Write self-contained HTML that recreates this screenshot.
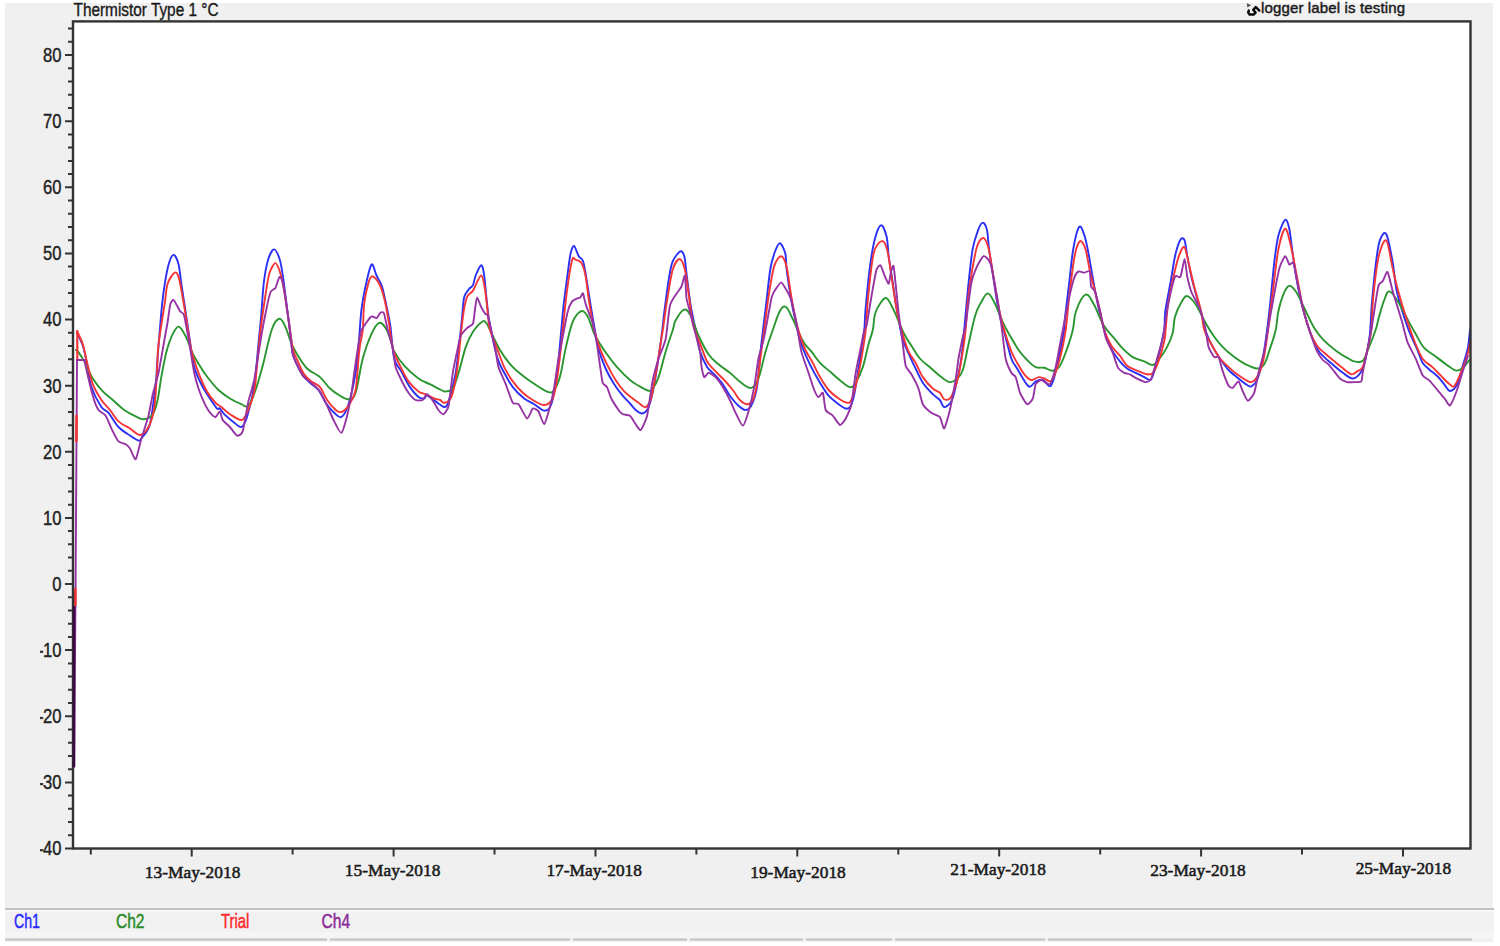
<!DOCTYPE html>
<html><head><meta charset="utf-8"><style>
html,body{margin:0;padding:0;width:1500px;height:946px;overflow:hidden;background:#fff;}
svg{display:block;font-family:"Liberation Sans",sans-serif;}
</style></head><body>
<svg width="1500" height="946" viewBox="0 0 1500 946"><rect x="0" y="0" width="1500" height="946" fill="#ffffff"/>
<rect x="5" y="3" width="1488" height="939" fill="#f0f0f0"/>
<rect x="73.0" y="21.4" width="1397.5" height="827.1" fill="#ffffff"/>
<g fill="none" stroke-width="1.9" stroke-linejoin="round" stroke-linecap="round">
<path d="M77.0,333.0 C77.9,334.9 81.3,340.9 82.8,345.5 C84.3,350.1 85.8,357.8 87.1,364.0 C88.4,370.2 89.3,380.6 91.4,387.0 C93.5,393.4 98.8,403.1 101.4,407.0 C104.0,410.9 105.9,409.8 108.5,412.8 C111.1,415.8 115.3,423.6 118.5,427.0 C121.7,430.4 127.0,433.6 130.0,435.6 C133.0,437.6 136.8,440.2 138.5,440.6 C140.2,441.0 139.7,441.0 141.4,438.5 C143.1,436.0 147.9,432.2 150.0,424.0 C152.1,415.8 154.6,392.7 155.7,384.0 C156.8,375.3 156.5,372.3 157.0,365.7 C157.5,359.1 158.2,349.2 159.0,340.0 C159.8,330.8 161.2,312.7 162.1,304.3 C163.0,295.9 163.8,289.9 164.8,283.7 C165.8,277.5 167.7,267.4 169.0,263.1 C170.3,258.8 172.4,254.7 173.8,254.9 C175.2,255.1 177.5,260.2 178.6,264.5 C179.7,268.8 180.3,276.7 181.3,283.7 C182.3,290.7 184.3,302.9 185.5,311.2 C186.7,319.4 188.3,330.3 189.6,338.7 C190.9,347.1 192.4,360.2 194.2,367.0 C196.0,373.8 198.9,379.5 201.3,384.2 C203.7,388.9 207.6,394.9 210.0,398.5 C212.4,402.1 215.5,407.0 217.0,408.5 C218.5,410.0 218.9,407.6 220.0,408.5 C221.1,409.4 222.3,412.3 224.2,414.2 C226.1,416.1 230.1,419.5 232.7,421.4 C235.3,423.3 239.2,427.7 241.3,427.0 C243.4,426.3 245.1,423.2 247.0,417.0 C248.9,410.8 252.5,396.6 254.2,385.7 C255.9,374.8 257.4,354.5 258.4,344.3 C259.4,334.1 260.2,327.1 261.0,318.0 C261.8,308.9 262.7,292.3 263.7,283.7 C264.7,275.1 266.4,265.5 267.9,260.4 C269.4,255.3 272.2,249.6 274.0,249.4 C275.8,249.2 278.2,254.9 279.6,259.0 C281.0,263.1 281.9,269.5 283.0,276.9 C284.1,284.3 285.9,299.2 287.1,308.5 C288.3,317.8 290.3,331.8 291.2,338.7 C292.1,345.6 291.3,349.2 292.8,354.3 C294.3,359.4 298.8,368.5 301.4,372.8 C304.0,377.1 307.4,380.2 310.0,382.8 C312.6,385.4 316.1,387.0 318.5,390.0 C320.9,393.0 323.3,399.4 325.7,402.8 C328.1,406.2 331.8,410.7 334.2,412.8 C336.6,414.9 339.3,418.3 341.4,417.0 C343.5,415.7 346.4,410.8 348.5,404.2 C350.6,397.6 354.1,381.7 355.6,372.8 C357.1,363.9 357.7,354.2 358.6,345.0 C359.5,335.8 360.3,320.0 361.3,311.2 C362.3,302.4 364.0,293.5 365.5,286.5 C367.0,279.5 370.0,266.1 371.6,264.5 C373.2,262.9 374.9,272.2 376.5,275.5 C378.1,278.8 380.6,282.2 382.0,286.5 C383.4,290.8 384.9,298.5 386.1,304.3 C387.3,310.1 389.0,316.9 390.2,325.0 C391.4,333.1 392.5,351.5 394.2,358.5 C395.9,365.5 398.9,367.1 401.3,371.4 C403.7,375.7 407.3,383.3 409.9,387.1 C412.5,390.9 416.4,395.3 418.5,397.0 C420.6,398.7 422.9,398.7 424.2,398.5 C425.5,398.3 425.3,395.3 427.0,395.7 C428.7,396.1 433.0,399.7 435.6,401.4 C438.2,403.1 442.2,407.0 444.2,407.0 C446.1,407.0 446.9,406.5 448.6,401.4 C450.3,396.3 454.0,382.5 455.7,372.8 C457.4,363.1 459.1,345.2 460.0,337.0 C460.9,328.8 461.4,324.0 462.0,318.1 C462.6,312.2 463.1,301.8 464.1,297.5 C465.1,293.2 467.6,291.1 468.9,289.2 C470.2,287.3 472.0,287.2 473.0,285.1 C474.0,283.0 474.5,278.5 475.7,275.5 C476.9,272.5 480.0,265.4 481.2,265.2 C482.4,265.0 483.2,268.9 484.0,274.1 C484.8,279.4 485.9,293.0 486.7,300.2 C487.5,307.4 487.9,313.7 489.5,322.2 C491.1,330.7 494.9,349.5 497.1,357.1 C499.3,364.7 501.8,368.3 504.2,372.8 C506.6,377.3 509.8,383.2 512.8,387.1 C515.8,391.0 521.0,395.9 524.2,398.5 C527.4,401.1 531.2,402.4 534.2,404.2 C537.2,406.0 541.6,410.7 544.2,410.7 C546.8,410.7 549.4,409.9 551.3,404.2 C553.2,398.5 555.6,383.9 557.1,372.8 C558.6,361.7 560.3,340.3 561.3,330.0 C562.3,319.7 562.7,312.9 563.7,304.3 C564.7,295.7 566.8,280.3 567.8,272.7 C568.8,265.1 569.7,257.5 570.6,253.5 C571.5,249.5 572.8,245.5 574.0,245.9 C575.2,246.3 577.4,253.9 578.8,256.2 C580.1,258.5 582.0,258.3 583.0,261.0 C584.0,263.7 584.7,268.2 585.7,274.1 C586.7,280.0 588.6,292.6 589.8,300.2 C591.0,307.8 592.7,317.7 594.0,325.0 C595.3,332.3 596.8,342.1 598.5,348.6 C600.2,355.1 603.2,363.2 605.6,368.5 C608.0,373.8 611.6,380.1 614.2,384.2 C616.8,388.3 620.3,392.8 622.7,395.7 C625.1,398.6 628.0,401.4 630.0,403.5 C632.0,405.6 633.9,408.5 635.7,410.0 C637.5,411.5 640.2,413.9 642.1,413.5 C644.0,413.1 646.8,411.5 648.6,407.1 C650.4,402.7 652.4,394.7 654.3,384.2 C656.2,373.7 659.9,348.1 661.4,337.1 C662.9,326.2 663.3,319.6 664.4,311.2 C665.5,302.8 667.3,288.4 668.5,281.0 C669.7,273.6 670.8,266.1 672.6,261.7 C674.4,257.3 678.4,252.2 680.2,251.4 C682.0,250.6 683.4,253.0 684.3,256.2 C685.2,259.4 685.5,265.5 686.4,272.7 C687.3,279.9 689.1,295.4 690.5,304.3 C691.9,313.2 694.6,324.7 696.0,331.8 C697.4,338.9 698.3,346.1 700.0,351.4 C701.7,356.7 705.0,363.7 707.1,367.1 C709.2,370.5 711.8,371.7 714.2,374.3 C716.6,376.9 720.4,381.0 722.8,384.2 C725.2,387.4 727.5,392.5 729.9,395.7 C732.3,398.9 736.1,403.6 738.5,405.7 C740.9,407.8 743.7,410.0 745.6,410.0 C747.5,410.0 749.6,409.1 751.3,405.7 C753.0,402.3 755.5,396.3 757.0,387.1 C758.5,377.9 759.9,356.7 761.3,344.3 C762.7,331.9 764.8,315.4 766.1,304.3 C767.4,293.2 769.0,277.6 770.2,270.0 C771.4,262.4 772.9,257.5 774.3,253.5 C775.7,249.5 778.1,243.2 779.8,243.2 C781.4,243.2 784.3,249.5 785.3,253.5 C786.3,257.5 785.9,263.4 786.7,270.0 C787.5,276.6 789.4,289.2 790.8,297.5 C792.2,305.8 794.7,318.0 796.3,325.0 C797.9,332.0 799.3,338.4 801.3,344.3 C803.3,350.2 807.1,358.5 809.9,364.3 C812.7,370.1 817.2,378.1 820.0,382.8 C822.8,387.5 825.8,392.5 828.6,395.7 C831.4,398.9 836.0,402.3 838.6,404.2 C841.2,406.1 844.0,408.1 845.7,408.5 C847.4,408.9 848.7,409.2 850.0,407.1 C851.3,405.0 852.8,401.5 854.3,394.2 C855.8,386.9 858.5,368.1 860.0,358.5 C861.5,348.9 863.5,337.1 864.3,330.0 C865.1,322.9 864.6,320.2 865.4,311.2 C866.2,302.2 868.1,280.9 869.5,270.0 C870.9,259.1 873.2,245.1 875.0,238.4 C876.8,231.7 879.4,225.5 881.2,225.3 C883.0,225.1 885.6,232.4 886.7,237.0 C887.8,241.6 887.8,249.2 888.7,256.2 C889.6,263.2 891.7,275.4 892.9,283.7 C894.1,291.9 895.6,302.9 897.0,311.2 C898.4,319.4 901.0,332.9 902.5,338.7 C904.0,344.5 905.3,345.9 907.1,350.0 C908.9,354.1 911.8,360.8 914.2,365.7 C916.6,370.6 920.0,378.5 922.8,382.8 C925.6,387.1 930.2,391.6 932.8,394.2 C935.4,396.8 938.2,398.1 939.9,400.0 C941.6,401.9 942.5,406.9 944.2,407.1 C945.9,407.3 949.6,404.4 951.3,401.4 C953.0,398.4 954.1,393.5 955.6,387.1 C957.1,380.7 960.0,367.1 961.3,358.5 C962.6,349.9 963.1,341.2 964.2,330.0 C965.3,318.8 967.2,295.8 968.5,283.7 C969.8,271.6 971.2,257.4 972.6,249.4 C974.0,241.4 976.6,234.1 978.1,230.1 C979.6,226.1 981.6,222.6 982.9,222.6 C984.2,222.6 986.1,226.1 987.0,230.1 C987.9,234.1 988.2,242.4 989.1,249.4 C990.0,256.4 991.8,267.6 993.2,276.9 C994.6,286.2 997.1,303.0 998.7,311.2 C1000.4,319.4 1002.3,324.7 1004.2,331.8 C1006.1,338.9 1009.4,353.0 1011.3,358.5 C1013.2,364.0 1014.5,364.3 1017.1,368.5 C1019.7,372.7 1025.8,384.5 1028.6,386.4 C1031.4,388.3 1033.6,382.4 1035.7,381.4 C1037.8,380.4 1040.7,379.2 1042.8,380.0 C1044.9,380.8 1048.3,386.8 1050.0,386.4 C1051.7,386.0 1053.0,381.3 1054.3,377.1 C1055.6,372.9 1057.0,365.6 1058.5,358.5 C1060.0,351.4 1063.2,336.1 1064.2,330.0 C1065.0,323.9 1064.3,325.0 1065.0,318.1 C1065.7,311.2 1067.9,294.0 1069.1,283.7 C1070.3,273.4 1071.7,257.9 1073.2,249.4 C1074.7,240.8 1077.6,228.6 1079.4,226.7 C1081.2,224.8 1083.5,232.6 1084.9,237.0 C1086.3,241.4 1087.7,249.2 1089.0,256.2 C1090.3,263.2 1092.3,275.4 1093.8,283.7 C1095.3,291.9 1097.4,303.4 1099.3,311.2 C1101.2,319.0 1104.2,330.0 1106.2,336.0 C1108.2,342.0 1110.7,347.6 1112.8,351.4 C1114.9,355.2 1117.8,358.8 1119.9,361.4 C1122.0,364.0 1124.7,366.8 1127.1,368.5 C1129.5,370.2 1133.0,371.5 1135.6,372.8 C1138.2,374.1 1142.0,376.0 1144.2,377.1 C1146.5,378.2 1149.1,380.9 1150.6,380.0 C1152.1,379.1 1153.0,375.0 1154.2,371.4 C1155.4,367.8 1157.0,361.9 1158.5,355.7 C1160.0,349.5 1163.2,336.7 1164.2,330.0 C1165.2,323.3 1164.3,318.6 1165.3,311.2 C1166.3,303.8 1169.3,289.2 1170.8,281.0 C1172.3,272.8 1173.6,262.4 1175.0,256.2 C1176.4,250.0 1179.0,242.1 1180.4,239.7 C1181.8,237.3 1183.6,237.9 1184.6,240.4 C1185.6,242.9 1186.3,250.7 1187.3,256.2 C1188.3,261.7 1190.0,270.7 1191.4,276.9 C1192.8,283.1 1195.2,291.3 1196.9,297.5 C1198.6,303.7 1201.0,312.9 1202.4,318.1 C1203.8,323.3 1204.4,327.6 1206.0,332.0 C1207.6,336.4 1210.7,343.1 1212.8,347.1 C1214.9,351.1 1217.6,355.1 1220.0,358.5 C1222.4,361.9 1225.8,367.0 1228.6,370.0 C1231.4,373.0 1235.7,376.2 1238.5,378.5 C1241.3,380.8 1245.2,383.8 1247.1,385.0 C1249.0,386.2 1249.9,387.1 1251.4,386.4 C1252.9,385.6 1255.4,384.2 1257.1,380.0 C1258.8,375.8 1261.3,366.0 1262.8,358.5 C1264.3,351.0 1266.0,338.1 1267.1,330.0 C1268.2,321.9 1269.0,314.3 1270.1,304.3 C1271.2,294.3 1273.0,273.4 1274.2,263.1 C1275.4,252.8 1276.8,242.1 1278.4,235.6 C1280.1,229.1 1283.6,220.8 1285.2,219.8 C1286.8,218.8 1288.3,224.3 1289.3,228.7 C1290.3,233.1 1291.1,242.2 1292.1,249.4 C1293.1,256.6 1294.8,268.7 1296.2,276.9 C1297.6,285.1 1299.8,296.7 1301.7,304.3 C1303.6,311.9 1306.3,321.1 1308.6,327.7 C1310.9,334.3 1314.8,344.2 1317.1,348.6 C1319.4,353.0 1321.6,354.5 1324.2,357.1 C1326.8,359.7 1331.4,363.3 1334.2,365.7 C1337.0,368.1 1340.0,370.9 1342.8,372.8 C1345.6,374.7 1350.0,378.7 1352.8,378.5 C1355.6,378.3 1359.4,374.4 1361.3,371.4 C1363.2,368.4 1364.3,364.1 1365.6,358.5 C1366.9,352.9 1369.0,342.4 1369.9,334.3 C1370.8,326.2 1370.9,315.0 1371.8,304.3 C1372.7,293.6 1374.7,272.8 1375.9,263.1 C1377.1,253.4 1378.5,244.0 1380.1,239.7 C1381.7,235.4 1384.4,230.8 1386.3,234.2 C1388.2,237.6 1391.2,253.9 1392.7,262.3 C1394.2,270.7 1394.9,282.1 1396.5,290.0 C1398.1,297.9 1401.3,308.1 1403.4,314.7 C1405.5,321.3 1408.1,328.9 1410.2,334.0 C1412.3,339.1 1415.2,344.7 1417.1,349.0 C1419.0,353.3 1420.7,359.7 1422.6,362.8 C1424.5,365.9 1427.2,367.6 1429.5,369.7 C1431.8,371.8 1435.4,374.2 1437.7,376.5 C1440.0,378.8 1442.8,382.6 1444.6,384.8 C1446.4,387.0 1448.2,391.0 1450.0,391.0 C1451.8,391.0 1455.0,388.4 1456.9,384.8 C1458.8,381.2 1460.8,372.6 1462.4,367.0 C1464.1,361.4 1466.8,353.3 1467.9,347.7 C1469.0,342.1 1469.7,332.5 1470.0,329.8" stroke="#2a30f4"/>
<path d="M76.0,350.0 C76.3,350.3 76.4,349.3 77.9,351.4 C79.4,353.5 81.6,356.4 84.3,361.4 C87.0,366.4 89.4,373.0 92.8,378.5 C96.2,384.0 99.1,387.5 102.8,391.4 C106.5,395.3 108.9,396.6 112.8,400.0 C116.7,403.4 120.0,407.0 124.2,410.0 C128.4,413.0 132.0,414.7 135.7,416.4 C139.4,418.1 141.1,419.6 144.2,419.2 C147.3,418.8 150.3,417.7 152.8,414.2 C155.3,410.7 156.0,406.9 157.6,400.0 C159.2,393.1 159.8,385.2 161.4,376.5 C163.0,367.8 164.6,359.4 166.2,352.8 C167.8,346.2 168.6,344.2 170.0,340.4 C171.4,336.6 172.2,334.4 173.8,331.9 C175.4,329.4 176.8,326.6 178.5,326.6 C180.2,326.6 181.6,329.2 183.3,331.9 C185.0,334.6 186.3,337.4 188.0,341.4 C189.7,345.4 190.7,349.4 192.8,353.7 C194.9,358.0 196.8,360.9 199.4,365.1 C202.0,369.3 203.5,371.9 207.0,376.5 C210.5,381.1 214.3,386.0 218.5,390.0 C222.7,394.0 225.7,395.9 229.9,398.5 C234.1,401.1 237.9,402.9 241.3,404.2 C244.7,405.5 245.8,408.3 248.4,405.7 C251.0,403.1 253.0,397.3 255.6,390.0 C258.2,382.7 259.7,376.9 262.7,365.7 C265.7,354.5 268.9,337.6 272.0,329.0 C275.1,320.4 277.1,319.0 279.6,318.8 C282.1,318.6 283.6,323.3 285.7,327.7 C287.8,332.1 289.1,337.9 291.2,342.8 C293.3,347.7 294.2,349.6 297.1,354.3 C300.0,359.0 302.9,364.3 307.1,368.5 C311.3,372.7 315.8,373.4 320.0,377.1 C324.2,380.8 326.3,385.1 330.0,388.5 C333.7,391.9 336.6,393.7 340.0,395.7 C343.4,397.7 345.6,399.7 348.5,399.2 C351.4,398.7 353.0,400.3 355.6,392.8 C358.2,385.3 359.9,369.2 362.8,358.5 C365.7,347.8 368.3,340.8 371.3,334.3 C374.3,327.8 376.5,323.9 379.2,322.9 C381.9,321.9 383.8,325.4 386.1,329.0 C388.4,332.6 390.1,338.7 391.6,342.8 C393.1,346.9 391.9,347.2 394.2,351.4 C396.5,355.6 399.7,360.7 404.2,365.7 C408.7,370.7 413.8,375.1 418.5,378.5 C423.2,381.9 425.7,382.1 429.9,384.2 C434.1,386.3 438.4,388.7 441.3,390.0 C444.2,391.3 443.6,391.7 445.7,391.4 C447.8,391.1 450.4,391.9 452.8,388.5 C455.2,385.1 456.2,380.4 458.6,372.8 C461.0,365.2 463.1,354.6 465.7,347.1 C468.3,339.6 469.9,336.5 473.0,331.8 C476.1,327.1 480.1,323.0 482.6,321.5 C485.1,320.0 485.3,322.0 486.7,323.6 C488.1,325.2 487.6,325.2 490.0,330.0 C492.4,334.8 496.1,343.5 500.0,350.0 C503.9,356.5 507.2,361.0 511.4,365.7 C515.6,370.4 518.1,372.0 522.8,375.7 C527.5,379.4 532.4,382.7 537.1,385.7 C541.8,388.7 545.4,391.3 548.5,392.1 C551.6,392.9 552.1,392.8 554.2,390.0 C556.3,387.2 557.8,384.7 559.9,377.1 C562.0,369.5 563.4,358.4 565.6,348.6 C567.8,338.8 569.8,329.9 572.0,323.6 C574.2,317.3 575.5,316.3 577.5,314.0 C579.5,311.7 581.0,310.4 583.0,311.2 C585.0,312.0 586.2,313.6 588.5,318.1 C590.8,322.6 591.9,329.4 595.3,336.0 C598.7,342.6 603.0,348.6 607.0,354.3 C611.0,360.0 612.8,362.4 617.0,367.1 C621.2,371.8 626.0,376.6 630.0,380.0 C634.0,383.4 635.2,383.7 638.6,385.7 C642.0,387.7 646.0,390.2 648.6,390.7 C651.2,391.2 651.0,391.0 652.8,388.5 C654.6,386.0 656.2,383.9 658.6,377.1 C661.0,370.3 663.1,360.0 665.7,351.4 C668.3,342.8 671.0,335.6 672.8,330.0 C674.6,324.4 673.4,324.5 675.4,320.8 C677.4,317.1 680.8,310.8 683.6,309.8 C686.4,308.8 687.7,310.5 690.5,315.3 C693.3,320.1 695.4,328.9 698.7,336.0 C702.0,343.1 704.9,349.1 708.5,354.3 C712.1,359.5 714.6,360.9 718.5,364.3 C722.4,367.7 725.7,369.4 729.9,372.8 C734.1,376.2 737.4,380.1 741.3,382.8 C745.2,385.6 748.1,388.6 751.3,387.8 C754.5,387.0 755.9,385.2 758.5,378.5 C761.1,371.8 763.0,360.3 765.6,351.4 C768.2,342.5 770.2,337.4 772.8,330.0 C775.4,322.6 777.4,315.4 779.8,311.2 C782.2,307.0 783.5,305.3 786.0,307.1 C788.5,308.9 790.4,314.5 793.6,320.8 C796.8,327.1 800.0,335.9 803.2,341.5 C806.4,347.1 808.2,347.5 811.3,351.4 C814.4,355.3 816.3,358.9 820.0,362.8 C823.7,366.7 827.5,369.4 831.4,372.8 C835.3,376.2 838.0,378.8 841.4,381.4 C844.8,384.0 847.4,386.8 850.0,387.1 C852.6,387.4 853.4,386.5 855.7,382.8 C858.0,379.1 860.5,374.2 862.8,367.1 C865.1,360.0 866.7,351.1 868.5,344.3 C870.3,337.5 871.6,335.6 872.8,330.0 C874.0,324.4 873.6,318.9 875.0,314.0 C876.4,309.1 878.4,305.9 880.5,303.0 C882.6,300.1 884.2,296.7 886.7,298.2 C889.2,299.7 891.1,304.8 894.2,311.2 C897.3,317.6 900.6,326.9 903.8,333.2 C907.0,339.5 908.4,341.1 911.4,345.7 C914.4,350.3 916.3,354.3 919.9,358.5 C923.5,362.7 927.4,365.1 931.3,368.5 C935.2,371.9 937.9,374.6 941.3,377.1 C944.7,379.6 947.0,381.8 949.9,382.1 C952.8,382.4 954.6,380.7 957.0,378.5 C959.4,376.3 960.7,376.3 962.8,370.0 C964.9,363.7 966.2,354.3 968.5,344.3 C970.8,334.3 973.0,322.9 975.3,315.3 C977.6,307.7 978.5,307.0 980.8,303.0 C983.1,299.0 985.2,293.4 987.7,293.4 C990.2,293.4 991.8,297.7 994.6,303.0 C997.4,308.3 1000.0,316.2 1002.8,322.2 C1005.6,328.2 1007.1,330.6 1010.0,335.7 C1012.9,340.8 1015.5,345.5 1018.6,350.0 C1021.7,354.5 1024.0,356.9 1027.1,360.0 C1030.2,363.1 1032.5,365.7 1035.7,367.1 C1038.9,368.5 1041.2,367.1 1044.3,367.8 C1047.4,368.5 1049.9,371.1 1052.8,370.7 C1055.7,370.3 1057.4,369.8 1060.0,365.7 C1062.6,361.6 1064.8,355.1 1067.1,348.6 C1069.4,342.1 1071.2,336.9 1072.8,330.0 C1074.4,323.1 1073.7,317.7 1076.0,311.2 C1078.3,304.7 1082.3,296.0 1085.6,294.7 C1088.9,293.4 1090.5,298.7 1093.8,304.3 C1097.1,309.9 1099.7,318.7 1103.5,325.0 C1107.3,331.3 1111.0,334.4 1114.5,338.7 C1118.0,343.0 1119.4,345.2 1122.8,348.6 C1126.2,352.0 1128.9,354.8 1132.8,357.1 C1136.7,359.4 1140.5,360.0 1144.2,361.4 C1147.9,362.8 1150.2,365.3 1152.8,365.0 C1155.4,364.7 1155.9,363.3 1158.5,360.0 C1161.1,356.7 1164.4,352.1 1167.0,347.1 C1169.6,342.1 1171.2,338.5 1172.7,332.9 C1174.2,327.3 1173.3,322.4 1175.0,316.7 C1176.7,311.0 1179.5,305.4 1181.8,301.6 C1184.1,297.8 1184.8,295.6 1187.3,296.1 C1189.8,296.6 1192.3,299.5 1195.6,304.3 C1198.9,309.1 1201.9,316.4 1205.2,322.2 C1208.5,328.0 1210.5,331.4 1213.7,336.0 C1216.9,340.6 1219.0,343.2 1222.8,347.1 C1226.6,351.0 1230.1,353.9 1234.3,357.1 C1238.5,360.3 1241.5,362.2 1245.7,364.3 C1249.9,366.4 1253.7,368.5 1257.1,368.5 C1260.5,368.5 1261.8,367.9 1264.2,364.3 C1266.6,360.7 1267.9,354.9 1270.0,348.6 C1272.1,342.3 1274.2,336.9 1275.7,330.0 C1277.2,323.1 1276.9,317.9 1278.4,311.2 C1279.9,304.5 1281.8,298.1 1283.8,293.4 C1285.8,288.7 1287.0,286.1 1289.3,285.8 C1291.6,285.5 1293.4,287.8 1296.2,292.0 C1299.0,296.2 1301.2,302.0 1304.5,308.5 C1307.8,315.0 1310.6,321.9 1314.1,327.7 C1317.6,333.5 1319.5,335.8 1323.7,340.1 C1327.9,344.4 1332.5,348.0 1337.0,351.4 C1341.5,354.8 1345.3,356.7 1348.5,358.5 C1351.7,360.3 1351.6,361.0 1354.2,361.4 C1356.8,361.8 1360.1,363.0 1362.7,360.7 C1365.3,358.4 1366.0,354.2 1368.4,348.6 C1370.8,343.0 1373.7,335.6 1375.6,330.0 C1377.5,324.4 1377.1,323.6 1378.7,318.1 C1380.3,312.6 1382.2,305.1 1384.2,300.2 C1386.2,295.3 1386.8,290.8 1389.6,291.4 C1392.3,292.0 1395.7,298.2 1399.2,303.7 C1402.7,309.2 1405.8,316.0 1408.8,321.6 C1411.8,327.2 1412.9,329.2 1415.7,334.0 C1418.5,338.8 1420.5,343.7 1424.0,347.7 C1427.5,351.7 1430.9,352.9 1434.9,355.9 C1438.9,358.9 1442.1,361.5 1445.9,364.2 C1449.7,366.9 1452.5,369.6 1455.5,370.4 C1458.5,371.2 1459.9,370.2 1462.4,368.3 C1464.9,366.4 1468.0,361.5 1469.3,360.0" stroke="#2a962f"/>
<path d="M77.0,331.0 C77.9,333.0 81.3,339.5 82.8,344.3 C84.3,349.1 85.6,356.8 87.1,362.8 C88.6,368.8 90.7,378.6 92.8,384.2 C94.9,389.8 98.8,396.1 101.4,400.0 C104.0,403.9 107.4,406.8 110.0,410.0 C112.6,413.2 115.5,418.6 118.5,421.4 C121.5,424.2 126.8,426.5 130.0,428.5 C133.2,430.5 137.2,435.2 140.0,435.0 C142.8,434.8 146.4,431.0 148.5,427.0 C150.6,423.0 152.9,416.6 154.2,408.5 C155.5,400.4 156.4,382.3 157.0,372.8 C157.6,363.3 157.3,355.5 158.5,345.0 C159.7,334.5 163.4,312.2 164.8,303.0 C166.2,293.8 166.1,288.2 167.6,283.7 C169.1,279.2 172.8,273.7 174.5,272.7 C176.2,271.7 177.4,273.2 178.6,276.9 C179.8,280.6 181.5,290.7 182.7,297.5 C183.9,304.3 185.7,315.1 186.8,322.2 C187.9,329.3 189.4,340.0 190.3,345.0 C191.2,350.0 191.6,351.5 192.8,355.7 C194.0,359.9 196.4,367.4 198.5,372.8 C200.6,378.2 204.4,386.9 207.0,391.4 C209.6,395.9 213.5,400.5 215.6,402.8 C217.7,405.1 219.2,405.3 221.3,407.0 C223.4,408.7 226.9,412.2 229.9,414.2 C232.9,416.1 238.7,420.2 241.3,420.0 C243.9,419.8 245.1,417.1 247.0,412.8 C248.9,408.5 252.7,398.5 254.2,391.4 C255.7,384.3 256.1,374.3 257.0,365.7 C257.9,357.1 258.8,344.5 260.0,334.3 C261.2,324.1 263.7,306.5 265.1,297.5 C266.5,288.5 267.7,279.3 269.2,274.1 C270.7,268.9 273.8,263.3 275.4,263.1 C277.0,262.9 278.8,268.4 280.2,272.7 C281.6,277.0 283.2,285.0 284.4,292.0 C285.6,299.0 287.2,311.0 288.5,319.5 C289.8,328.0 291.3,342.1 292.8,348.6 C294.3,355.1 296.8,358.9 298.5,362.8 C300.2,366.7 302.3,371.5 304.2,374.3 C306.1,377.1 309.0,379.5 311.4,381.4 C313.8,383.3 317.6,384.3 320.0,387.1 C322.4,389.9 324.7,396.6 327.1,400.0 C329.5,403.4 333.6,408.2 335.7,410.0 C337.8,411.8 339.5,412.6 341.4,412.0 C343.3,411.4 346.4,409.0 348.5,405.7 C350.6,402.4 354.1,397.1 355.6,390.0 C357.1,382.9 357.8,365.2 358.5,358.5 C359.2,351.8 359.4,349.3 360.0,345.0 C360.6,340.7 362.2,336.1 362.8,330.0 C363.4,323.9 363.3,311.2 364.1,304.3 C364.9,297.4 367.0,287.9 368.2,283.7 C369.4,279.5 370.7,276.2 372.3,276.2 C373.9,276.2 377.3,280.1 379.2,283.7 C381.1,287.3 383.3,294.4 384.7,300.2 C386.1,306.0 387.6,314.9 388.8,322.2 C390.0,329.5 391.1,342.1 392.8,348.6 C394.5,355.1 397.6,360.8 400.0,365.7 C402.4,370.6 405.7,377.5 408.5,381.4 C411.3,385.3 415.9,389.5 418.5,391.4 C421.1,393.3 423.2,393.1 425.6,394.2 C428.0,395.3 432.0,397.6 434.2,398.5 C436.4,399.4 438.5,399.4 440.0,400.0 C441.5,400.6 442.6,403.2 444.3,402.8 C446.0,402.4 449.5,401.9 451.4,397.0 C453.3,392.1 455.6,380.1 457.1,370.0 C458.6,359.9 460.3,339.2 461.4,330.0 C462.4,320.8 463.2,313.6 464.1,308.5 C465.0,303.4 466.2,298.8 467.5,296.1 C468.8,293.4 470.9,293.7 473.0,290.6 C475.1,287.5 479.3,275.3 481.2,275.5 C483.1,275.7 484.4,285.8 485.4,292.0 C486.4,298.2 487.4,311.0 488.1,316.7 C488.8,322.4 488.6,325.2 490.0,330.0 C491.4,334.8 495.0,343.0 497.1,348.6 C499.2,354.2 501.8,362.2 504.2,367.1 C506.6,372.0 510.0,377.5 512.8,381.4 C515.6,385.3 519.8,390.0 522.8,392.8 C525.8,395.6 529.6,398.2 532.8,400.0 C536.0,401.8 541.2,405.2 544.2,405.0 C547.2,404.8 550.9,402.5 552.8,398.5 C554.7,394.5 555.8,386.6 557.1,378.5 C558.4,370.4 559.9,356.9 561.3,344.3 C562.7,331.7 564.9,307.3 566.5,294.7 C568.1,282.1 570.7,265.6 572.0,260.4 C573.3,255.1 574.0,259.3 575.4,259.7 C576.8,260.1 580.1,260.5 581.6,263.1 C583.1,265.7 584.7,271.7 585.7,276.9 C586.7,282.1 587.5,290.7 588.5,297.5 C589.5,304.3 591.7,317.3 592.6,322.2 C593.5,327.1 593.1,326.0 594.2,330.0 C595.3,334.0 598.1,343.5 600.0,348.6 C601.9,353.7 604.7,359.6 607.0,364.3 C609.3,369.0 613.0,375.9 615.6,380.0 C618.2,384.1 621.6,388.6 624.2,391.4 C626.8,394.2 630.5,396.8 632.7,398.5 C634.9,400.2 636.6,401.5 638.6,402.8 C640.6,404.1 643.8,408.0 645.7,407.1 C647.6,406.2 649.7,403.3 651.4,397.1 C653.1,390.9 655.4,375.8 657.1,365.7 C658.8,355.6 661.3,339.8 662.8,330.0 C664.3,320.2 665.6,309.2 667.1,300.2 C668.6,291.2 670.7,276.2 672.6,270.0 C674.5,263.8 677.6,259.0 679.5,259.0 C681.4,259.0 683.6,264.2 685.0,270.0 C686.4,275.8 687.9,289.2 689.1,297.5 C690.3,305.8 691.4,317.6 693.2,325.0 C695.0,332.4 699.3,341.6 701.4,347.1 C703.5,352.6 705.0,357.8 707.1,361.4 C709.2,365.0 713.0,368.6 715.6,371.4 C718.2,374.2 721.6,377.2 724.2,380.0 C726.8,382.8 730.4,387.0 732.8,390.0 C735.2,393.0 737.8,397.9 739.9,400.0 C742.0,402.1 745.2,404.2 747.1,404.2 C749.0,404.2 751.3,403.0 752.8,400.0 C754.3,397.0 755.7,391.5 757.0,384.2 C758.3,376.9 760.2,359.5 761.3,351.4 C762.4,343.3 763.1,338.5 764.2,330.0 C765.3,321.5 767.3,304.3 768.8,294.7 C770.3,285.1 772.4,271.7 774.3,265.9 C776.2,260.1 779.3,256.0 781.2,256.2 C783.1,256.4 785.3,261.6 786.7,267.2 C788.1,272.8 789.4,285.1 790.8,293.4 C792.2,301.6 794.3,314.1 796.3,322.2 C798.3,330.3 801.7,341.0 804.2,347.1 C806.7,353.2 810.3,358.3 812.7,362.8 C815.1,367.3 817.6,373.0 820.0,377.1 C822.4,381.2 825.8,386.8 828.6,390.0 C831.4,393.2 835.8,396.6 838.6,398.5 C841.4,400.4 845.2,402.6 847.1,402.8 C849.0,403.0 849.9,403.4 851.4,400.0 C852.9,396.6 855.6,386.2 857.1,380.0 C858.6,373.8 860.1,366.0 861.4,358.5 C862.7,351.0 864.7,339.1 865.7,330.0 C866.7,320.9 866.9,309.0 868.1,297.5 C869.3,286.0 871.5,262.0 873.6,253.5 C875.7,245.0 879.8,241.5 881.9,241.1 C884.0,240.7 886.0,245.3 887.4,250.7 C888.8,256.1 890.1,267.8 891.5,276.9 C892.9,286.0 895.5,303.2 897.0,311.2 C898.5,319.2 899.7,324.0 901.4,330.0 C903.1,336.0 906.4,346.5 908.5,351.4 C910.6,356.3 913.5,358.9 915.6,362.8 C917.7,366.7 920.2,373.2 922.8,377.1 C925.4,381.0 930.2,386.1 932.8,388.5 C935.4,390.9 938.2,391.2 939.9,392.8 C941.6,394.4 942.7,398.3 944.2,399.2 C945.7,400.1 948.4,399.9 949.9,398.5 C951.4,397.1 952.9,393.4 954.2,390.0 C955.5,386.6 957.2,381.5 958.5,375.7 C959.8,369.9 961.7,358.3 962.8,351.4 C963.9,344.5 964.7,338.5 965.6,330.0 C966.5,321.5 967.0,306.2 968.5,294.7 C970.0,283.2 973.6,261.5 975.3,253.5 C976.9,245.5 978.1,243.4 979.5,241.1 C980.9,238.8 982.9,237.0 984.3,238.4 C985.7,239.8 987.6,243.9 989.1,250.7 C990.6,257.5 993.0,274.2 994.6,283.7 C996.2,293.2 998.7,307.1 1000.1,314.0 C1001.5,320.9 1002.5,324.4 1004.2,330.0 C1005.9,335.6 1009.4,346.5 1011.3,351.4 C1013.2,356.3 1015.1,359.4 1017.1,362.8 C1019.1,366.2 1022.2,371.7 1024.3,374.3 C1026.4,376.9 1029.3,379.6 1031.4,380.0 C1033.5,380.4 1036.7,377.3 1038.6,377.1 C1040.5,376.9 1042.6,377.9 1044.3,378.5 C1046.0,379.1 1048.5,381.8 1050.0,381.4 C1051.5,381.0 1052.8,379.1 1054.3,375.7 C1055.8,372.3 1058.3,365.4 1060.0,358.5 C1061.7,351.6 1064.3,339.1 1065.7,330.0 C1067.1,320.9 1067.8,308.6 1069.1,297.5 C1070.4,286.4 1072.9,264.7 1074.6,256.2 C1076.2,247.7 1078.4,242.1 1080.1,241.1 C1081.8,240.1 1084.2,245.1 1085.6,249.4 C1087.0,253.7 1088.3,263.6 1089.7,270.0 C1091.1,276.4 1093.5,285.4 1095.2,292.0 C1096.9,298.6 1099.4,308.3 1100.7,314.0 C1102.0,319.7 1102.6,325.2 1104.2,330.0 C1105.8,334.8 1109.0,341.8 1111.4,345.7 C1113.8,349.6 1117.5,352.7 1119.9,355.7 C1122.3,358.7 1124.7,363.6 1127.1,365.7 C1129.5,367.8 1132.6,368.7 1135.6,370.0 C1138.6,371.3 1144.4,373.9 1147.0,374.3 C1149.6,374.7 1151.1,374.7 1152.8,372.8 C1154.5,370.9 1156.8,366.1 1158.5,361.4 C1160.2,356.7 1163.1,346.1 1164.2,341.4 C1165.3,336.7 1165.0,335.6 1165.6,330.0 C1166.2,324.4 1166.7,313.3 1168.1,304.3 C1169.5,295.3 1173.2,277.8 1175.0,270.0 C1176.8,262.2 1179.0,255.5 1180.4,252.1 C1181.8,248.7 1183.4,245.7 1184.6,247.3 C1185.8,249.0 1187.3,257.2 1188.7,263.1 C1190.1,269.0 1192.3,279.3 1194.2,286.5 C1196.1,293.7 1199.6,304.7 1201.1,311.2 C1202.6,317.7 1202.8,325.0 1204.3,330.0 C1205.8,335.0 1209.0,340.0 1211.4,344.3 C1213.8,348.6 1217.4,355.1 1220.0,358.5 C1222.6,361.9 1226.0,364.7 1228.6,367.1 C1231.2,369.5 1234.5,372.4 1237.1,374.3 C1239.7,376.2 1243.6,378.8 1245.7,380.0 C1247.8,381.2 1249.7,382.5 1251.4,382.1 C1253.1,381.7 1255.4,380.0 1257.1,377.1 C1258.8,374.2 1261.3,368.8 1262.8,362.8 C1264.3,356.8 1265.6,347.9 1267.1,337.1 C1268.6,326.3 1271.2,303.8 1272.9,290.6 C1274.6,277.4 1276.6,258.7 1278.4,249.4 C1280.2,240.1 1283.4,229.3 1285.2,228.7 C1287.0,228.1 1289.0,238.6 1290.7,245.2 C1292.4,251.8 1294.3,263.2 1296.2,272.7 C1298.1,282.2 1301.0,299.6 1303.1,308.5 C1305.2,317.4 1307.9,326.2 1310.0,331.8 C1312.1,337.4 1315.0,342.6 1317.1,345.7 C1319.2,348.8 1321.8,350.7 1324.2,352.8 C1326.6,354.9 1330.2,357.9 1332.8,360.0 C1335.4,362.1 1338.5,365.0 1341.3,367.1 C1344.1,369.2 1348.9,373.7 1351.3,374.3 C1353.7,374.9 1355.3,372.5 1357.0,371.4 C1358.7,370.3 1361.2,370.1 1362.7,367.1 C1364.2,364.1 1365.7,357.0 1367.0,351.4 C1368.3,345.8 1370.4,338.1 1371.3,330.0 C1372.2,321.9 1372.1,308.6 1373.2,297.5 C1374.3,286.4 1376.7,264.8 1378.7,256.2 C1380.7,247.6 1384.2,238.5 1386.3,240.4 C1388.4,242.3 1391.0,261.2 1392.7,268.6 C1394.4,276.0 1395.9,282.7 1397.9,290.0 C1399.9,297.3 1403.6,309.9 1406.1,317.5 C1408.6,325.1 1411.8,334.6 1414.3,340.8 C1416.8,347.0 1419.9,354.8 1422.6,358.7 C1425.3,362.6 1429.5,364.4 1432.2,366.9 C1434.9,369.4 1437.9,372.7 1440.4,375.2 C1442.9,377.7 1446.6,381.8 1448.7,383.4 C1450.8,385.0 1452.4,387.8 1454.2,386.2 C1456.0,384.6 1458.9,377.3 1461.0,372.4 C1463.1,367.4 1466.6,357.7 1467.9,353.2 C1469.2,348.7 1469.7,343.8 1470.0,342.2" stroke="#f53535"/>
<path d="M77.3,331 L77.3,360" stroke="#f53535" stroke-width="2.2"/>
<path d="M74,767 L75.5,600 L77,360 L84.3,360 " stroke="#9633a3" stroke-linejoin="miter"/>
<path d="M84.3,360.0 C85.1,363.6 91.4,390.7 92.8,395.7 C94.2,400.7 97.2,408.0 98.5,410.0 C99.8,412.0 104.3,413.6 105.7,415.7 C107.1,417.8 111.5,428.8 112.8,431.4 C114.1,434.0 117.2,440.1 118.5,441.4 C119.8,442.7 124.5,443.5 125.7,444.2 C126.9,444.9 129.0,447.0 130.0,448.5 C131.0,450.0 134.6,460.2 135.7,459.2 C136.8,458.2 140.1,442.9 141.4,438.5 C142.7,434.1 147.4,420.1 148.5,415.7 C149.6,411.3 151.8,398.5 152.8,394.2 C153.8,389.9 157.4,377.7 158.5,372.8 C159.6,367.9 162.6,350.1 163.5,345.0 C164.4,339.9 166.9,326.3 167.6,322.2 C168.3,318.1 169.7,306.5 170.3,304.3 C170.9,302.1 172.8,299.5 173.8,300.2 C174.8,300.9 179.0,309.7 180.0,311.2 C181.0,312.7 183.0,311.9 184.0,315.3 C185.0,318.7 188.6,339.2 189.6,345.0 C190.6,350.8 193.3,368.4 194.2,372.8 C195.1,377.2 197.4,385.2 198.5,388.5 C199.6,391.8 204.3,403.1 205.6,405.7 C206.9,408.3 210.3,413.1 211.3,414.2 C212.3,415.3 214.7,417.3 215.6,417.0 C216.5,416.7 219.2,411.1 219.9,411.4 C220.6,411.7 221.7,418.4 222.7,420.0 C223.7,421.6 228.5,425.4 229.9,427.0 C231.3,428.6 235.7,435.2 237.0,435.6 C238.3,436.0 241.6,434.8 242.7,431.4 C243.8,428.0 247.2,406.5 248.4,401.4 C249.6,396.3 252.9,386.5 254.2,380.0 C255.5,373.5 260.1,343.1 261.3,336.0 C262.5,328.9 265.6,312.9 266.5,308.5 C267.4,304.1 269.7,294.1 270.6,292.0 C271.5,289.9 274.5,289.4 275.4,287.9 C276.3,286.4 278.8,277.3 279.6,276.9 C280.4,276.5 282.1,279.4 283.0,283.7 C283.9,288.0 287.5,312.4 288.5,319.5 C289.5,326.6 291.4,348.7 292.8,354.3 C294.2,359.9 300.8,372.7 302.8,375.7 C304.8,378.7 311.1,382.6 312.8,384.2 C314.5,385.8 318.6,389.2 320.0,391.4 C321.4,393.5 325.7,402.7 327.1,405.7 C328.5,408.7 332.8,418.7 334.2,421.4 C335.6,424.1 340.1,433.4 341.4,432.8 C342.7,432.2 346.1,419.6 347.1,415.7 C348.1,411.8 350.7,398.5 351.4,394.2 C352.1,389.9 353.5,377.8 354.2,372.8 C354.9,367.8 357.8,348.5 358.5,344.3 C359.2,340.1 360.1,333.3 361.3,330.5 C362.6,327.7 369.5,317.9 371.0,316.7 C372.5,315.5 375.5,318.5 376.5,318.1 C377.5,317.7 379.9,313.1 380.6,312.6 C381.4,312.1 383.3,311.7 384.0,313.3 C384.7,314.9 386.6,325.5 387.5,329.0 C388.4,332.5 392.0,344.8 392.8,348.6 C393.6,352.4 394.8,364.0 395.6,367.1 C396.5,370.2 400.0,377.4 401.3,380.0 C402.6,382.6 407.1,390.8 408.5,392.8 C409.9,394.8 414.2,399.3 415.6,400.0 C417.0,400.7 421.6,400.6 422.7,400.0 C423.8,399.4 425.9,393.9 427.0,394.2 C428.1,394.5 433.1,401.2 434.2,402.8 C435.3,404.4 437.5,408.9 438.4,410.0 C439.3,411.1 442.6,414.6 443.6,414.2 C444.6,413.8 447.7,409.8 448.6,405.7 C449.5,401.6 451.9,378.2 452.8,372.8 C453.7,367.4 456.3,355.1 457.1,351.4 C457.9,347.7 459.6,338.4 460.6,336.0 C461.6,333.6 466.3,328.9 467.5,327.7 C468.7,326.5 472.2,325.5 473.0,323.6 C473.8,321.7 474.7,311.1 475.1,308.5 C475.5,305.9 476.5,297.6 477.1,297.5 C477.7,297.4 480.4,305.5 481.2,307.1 C482.0,308.8 484.7,313.0 485.4,314.0 C486.1,315.0 487.1,313.0 488.1,316.7 C489.1,320.4 494.7,346.4 495.7,351.4 C496.7,356.4 497.5,363.8 498.5,367.1 C499.5,370.4 504.3,380.6 505.7,384.2 C507.1,387.8 511.5,400.8 512.8,402.8 C514.1,404.8 517.1,402.6 518.5,404.2 C519.9,405.8 525.7,418.1 527.1,418.5 C528.5,418.9 531.7,409.2 532.8,408.5 C533.9,407.8 537.4,409.8 538.5,411.4 C539.6,413.0 543.1,424.6 544.2,424.2 C545.3,423.8 548.9,410.8 549.9,407.1 C550.9,403.4 553.3,392.0 554.2,387.1 C555.1,382.2 557.6,363.9 558.5,358.5 C559.4,353.1 562.6,337.7 563.5,333.0 C564.4,328.3 566.9,314.3 567.8,311.2 C568.6,308.1 571.2,302.8 572.0,301.6 C572.8,300.4 575.3,299.3 576.1,298.9 C576.9,298.5 579.5,298.1 580.2,297.5 C580.9,296.9 582.5,292.7 583.0,293.4 C583.5,294.1 585.0,302.1 585.7,304.3 C586.4,306.5 589.1,313.5 589.8,315.3 C590.5,317.1 591.9,319.3 592.6,322.2 C593.3,325.1 596.3,339.9 597.0,344.3 C597.7,348.7 599.4,361.8 600.0,365.7 C600.6,369.6 602.0,380.7 602.7,382.8 C603.4,384.9 606.1,385.5 607.0,387.1 C607.9,388.7 610.1,396.2 611.3,398.5 C612.4,400.8 617.4,408.4 618.5,410.0 C619.6,411.6 621.6,413.6 622.7,414.2 C623.9,414.8 628.7,414.7 630.0,415.7 C631.3,416.7 634.6,422.8 635.7,424.2 C636.8,425.6 639.6,430.9 640.7,430.0 C641.8,429.1 645.9,420.7 647.1,415.7 C648.3,410.7 651.6,385.7 652.8,380.0 C653.9,374.3 657.3,362.6 658.6,358.5 C659.9,354.4 664.6,344.0 665.7,338.7 C666.8,333.4 668.8,310.2 669.9,305.7 C671.0,301.2 675.5,295.3 676.7,293.4 C677.9,291.5 680.7,288.3 681.5,286.5 C682.3,284.7 684.5,274.4 685.0,275.5 C685.5,276.6 686.0,294.2 686.4,297.5 C686.8,300.8 688.4,305.8 689.1,308.5 C689.8,311.2 692.1,320.7 693.2,325.0 C694.3,329.3 699.2,347.3 700.0,351.4 C700.8,355.5 701.0,363.1 701.4,365.7 C701.8,368.3 703.5,376.4 704.2,377.1 C704.9,377.8 707.4,372.8 708.5,372.8 C709.6,372.8 714.2,375.7 715.6,377.1 C717.0,378.5 721.4,384.8 722.8,387.1 C724.2,389.4 728.6,397.4 729.9,400.0 C731.2,402.6 734.3,410.2 735.6,412.8 C736.9,415.4 741.5,425.7 742.8,425.6 C744.1,425.5 747.4,415.2 748.5,411.4 C749.6,407.5 753.2,392.4 754.2,387.1 C755.2,381.8 757.5,363.5 758.5,358.5 C759.5,353.5 762.9,343.2 764.2,337.1 C765.5,331.0 770.5,302.3 771.6,297.5 C772.8,292.7 774.7,290.7 775.7,289.2 C776.7,287.7 780.1,282.3 781.2,282.4 C782.3,282.5 785.7,289.0 786.7,290.6 C787.7,292.2 789.8,295.7 790.8,298.9 C791.8,302.1 795.2,316.9 796.3,322.2 C797.3,327.4 800.1,346.3 801.3,351.4 C802.5,356.5 807.2,368.9 808.5,372.8 C809.8,376.7 813.2,387.6 814.2,390.0 C815.2,392.4 817.5,396.8 818.4,397.1 C819.3,397.4 822.2,391.5 822.9,392.8 C823.6,394.1 824.7,407.7 825.7,410.0 C826.7,412.3 831.4,414.2 832.8,415.7 C834.2,417.2 838.7,424.7 840.0,425.0 C841.3,425.3 844.6,420.6 845.7,418.5 C846.8,416.4 850.4,408.8 851.4,404.2 C852.4,399.6 854.8,378.1 855.7,372.8 C856.6,367.5 859.1,355.7 860.0,351.4 C860.9,347.1 863.6,332.6 864.3,330.0 C865.0,327.4 865.9,328.8 866.7,325.0 C867.5,321.2 871.2,297.5 872.2,292.0 C873.2,286.5 875.6,272.7 876.4,270.0 C877.2,267.3 879.7,264.6 880.5,265.2 C881.3,265.8 883.8,273.6 884.6,275.5 C885.4,277.4 888.1,284.0 888.7,283.7 C889.3,283.4 890.3,274.5 890.8,272.7 C891.3,270.9 893.0,264.8 893.5,265.9 C894.0,267.0 895.1,279.2 895.6,283.7 C896.1,288.2 897.7,305.1 898.4,311.2 C899.1,317.3 902.1,338.9 902.8,344.3 C903.5,349.8 904.8,362.7 905.7,365.7 C906.6,368.7 910.1,372.0 911.4,374.3 C912.7,376.6 917.4,385.5 918.5,388.5 C919.6,391.5 921.5,401.8 922.8,404.2 C924.1,406.6 929.6,411.5 931.3,412.8 C933.0,414.1 938.6,415.5 939.9,417.1 C941.2,418.7 943.2,429.2 944.2,428.5 C945.2,427.8 948.8,414.9 949.9,410.0 C951.0,405.1 954.7,385.1 955.6,380.0 C956.5,374.9 957.8,362.8 958.5,358.5 C959.2,354.2 962.1,340.5 962.8,337.1 C963.5,333.8 964.9,330.3 965.7,325.0 C966.5,319.7 970.1,289.5 971.2,283.7 C972.3,277.9 975.5,269.9 976.7,267.2 C977.9,264.4 982.2,256.6 983.6,256.2 C985.0,255.8 989.2,259.7 990.4,263.1 C991.6,266.5 994.9,284.4 996.0,290.6 C997.1,296.8 1000.4,318.2 1001.4,325.0 C1002.4,331.8 1004.6,353.7 1005.6,358.5 C1006.6,363.3 1010.3,370.9 1011.3,372.8 C1012.3,374.7 1014.8,375.1 1015.7,377.1 C1016.6,379.1 1018.9,390.1 1020.0,392.8 C1021.1,395.5 1025.8,403.6 1027.1,404.2 C1028.4,404.8 1031.9,400.5 1032.8,398.5 C1033.7,396.5 1034.8,386.1 1035.7,384.2 C1036.6,382.3 1040.0,380.0 1041.4,380.0 C1042.8,380.0 1048.6,385.5 1050.0,384.2 C1051.4,382.9 1054.7,371.1 1055.7,367.1 C1056.7,363.1 1059.3,348.0 1060.0,344.3 C1060.7,340.6 1061.9,334.7 1062.8,330.0 C1063.7,325.3 1067.9,302.8 1069.1,297.5 C1070.3,292.2 1073.6,279.5 1074.6,276.9 C1075.6,274.3 1077.7,271.8 1078.7,271.4 C1079.7,271.0 1083.1,272.7 1084.2,272.7 C1085.3,272.7 1089.0,270.0 1089.7,271.4 C1090.4,272.8 1090.5,284.4 1091.1,286.5 C1091.6,288.6 1094.2,289.2 1095.2,292.0 C1096.2,294.8 1099.7,309.5 1100.7,314.0 C1101.7,318.5 1104.4,333.2 1105.6,337.1 C1106.8,341.0 1111.8,350.4 1112.8,352.8 C1113.8,355.2 1115.0,359.8 1115.6,361.4 C1116.2,363.0 1117.6,367.4 1118.5,368.5 C1119.4,369.6 1123.1,372.2 1124.2,372.8 C1125.3,373.4 1128.8,373.8 1129.9,374.3 C1131.0,374.8 1134.0,377.0 1135.6,377.8 C1137.2,378.6 1144.0,382.0 1145.6,382.1 C1147.2,382.2 1150.1,380.9 1151.3,378.5 C1152.5,376.1 1156.1,361.9 1157.1,358.5 C1158.1,355.1 1160.6,347.2 1161.3,344.3 C1162.0,341.4 1163.5,334.0 1164.2,330.0 C1164.9,326.0 1167.0,309.6 1168.1,304.3 C1169.2,299.0 1173.8,279.6 1175.0,276.9 C1176.2,274.2 1179.4,278.7 1180.4,276.9 C1181.4,275.1 1183.9,259.0 1184.6,259.0 C1185.3,259.0 1186.6,273.6 1187.3,276.9 C1188.0,280.2 1190.2,288.8 1191.4,292.0 C1192.6,295.2 1198.3,304.9 1199.7,308.5 C1201.1,312.1 1204.3,323.8 1205.2,327.7 C1206.1,331.6 1207.7,344.2 1208.6,347.1 C1209.5,350.0 1213.3,356.1 1214.3,357.1 C1215.3,358.1 1217.8,355.7 1218.6,357.1 C1219.4,358.5 1221.8,368.5 1222.8,371.4 C1223.8,374.3 1227.6,384.1 1228.6,385.7 C1229.6,387.3 1231.8,388.2 1232.8,387.8 C1233.8,387.4 1237.5,381.0 1238.5,381.4 C1239.5,381.8 1241.9,389.5 1242.8,391.4 C1243.7,393.3 1246.7,400.6 1247.8,400.7 C1248.9,400.8 1253.1,395.6 1254.2,392.8 C1255.3,390.0 1257.5,376.9 1258.5,372.8 C1259.5,368.7 1263.3,355.7 1264.2,351.4 C1265.1,347.1 1266.7,336.5 1267.8,330.0 C1268.9,323.5 1274.4,292.8 1275.6,286.5 C1276.8,280.2 1278.7,270.2 1279.7,267.2 C1280.7,264.2 1284.2,256.5 1285.2,256.2 C1286.2,255.9 1288.5,263.8 1289.3,264.5 C1290.1,265.2 1292.7,261.2 1293.5,263.1 C1294.3,265.0 1296.5,278.6 1297.6,283.7 C1298.7,288.8 1303.1,308.8 1304.5,314.0 C1305.9,319.2 1310.0,332.3 1311.3,336.0 C1312.6,339.7 1315.9,349.0 1317.1,351.4 C1318.2,353.8 1321.7,358.7 1322.8,360.0 C1323.9,361.3 1327.4,363.2 1328.5,364.3 C1329.6,365.4 1333.1,370.0 1334.2,371.4 C1335.3,372.8 1338.6,377.4 1339.9,378.5 C1341.2,379.6 1345.6,381.7 1347.0,382.1 C1348.4,382.5 1352.8,382.2 1354.2,382.1 C1355.6,382.0 1360.5,382.3 1361.3,381.4 C1362.1,380.5 1362.3,375.1 1362.7,372.8 C1363.1,370.5 1364.7,362.8 1365.6,358.5 C1366.5,354.2 1370.3,335.8 1371.3,330.0 C1372.3,324.2 1375.2,304.7 1375.9,300.2 C1376.6,295.7 1378.0,287.0 1378.7,285.1 C1379.4,283.2 1381.9,282.3 1382.8,281.0 C1383.7,279.7 1386.5,271.1 1387.5,272.0 C1388.5,272.9 1391.5,286.8 1392.4,290.0 C1393.3,293.2 1395.5,300.5 1396.5,303.7 C1397.5,306.9 1400.9,317.8 1402.0,321.6 C1403.1,325.5 1406.1,338.5 1407.5,342.2 C1408.9,345.9 1414.2,355.4 1415.7,358.7 C1417.2,362.0 1421.2,373.0 1422.6,375.2 C1424.0,377.4 1428.0,379.2 1429.5,380.7 C1431.0,382.2 1436.2,388.5 1437.7,390.3 C1439.2,392.1 1443.4,397.0 1444.6,398.5 C1445.8,400.0 1448.8,406.2 1450.0,405.4 C1451.2,404.6 1455.7,393.6 1456.9,390.3 C1458.1,387.0 1461.3,375.8 1462.4,372.4 C1463.5,369.0 1467.4,357.5 1467.9,355.9" stroke="#9633a3"/>
<path d="M76.6,416 L76.4,441 M75.4,589 L75.3,605" stroke="#f53535" stroke-width="2.6"/>
</g>
<rect x="73.0" y="21.4" width="1397.5" height="827.1" fill="none" stroke="#333" stroke-width="2.4"/>
<path d="M74,606 L74,767" stroke="#3a0a40" stroke-width="2.6" fill="none"/>
<path d="M65.0,848.5 L73.0,848.5 M68.0,835.3 L73.0,835.3 M68.0,822.1 L73.0,822.1 M68.0,808.8 L73.0,808.8 M68.0,795.6 L73.0,795.6 M65.0,782.4 L73.0,782.4 M68.0,769.2 L73.0,769.2 M68.0,755.9 L73.0,755.9 M68.0,742.7 L73.0,742.7 M68.0,729.5 L73.0,729.5 M65.0,716.3 L73.0,716.3 M68.0,703.0 L73.0,703.0 M68.0,689.8 L73.0,689.8 M68.0,676.6 L73.0,676.6 M68.0,663.4 L73.0,663.4 M65.0,650.1 L73.0,650.1 M68.0,636.9 L73.0,636.9 M68.0,623.7 L73.0,623.7 M68.0,610.5 L73.0,610.5 M68.0,597.2 L73.0,597.2 M65.0,584.0 L73.0,584.0 M68.0,570.8 L73.0,570.8 M68.0,557.6 L73.0,557.6 M68.0,544.3 L73.0,544.3 M68.0,531.1 L73.0,531.1 M65.0,517.9 L73.0,517.9 M68.0,504.7 L73.0,504.7 M68.0,491.5 L73.0,491.5 M68.0,478.2 L73.0,478.2 M68.0,465.0 L73.0,465.0 M65.0,451.8 L73.0,451.8 M68.0,438.6 L73.0,438.6 M68.0,425.3 L73.0,425.3 M68.0,412.1 L73.0,412.1 M68.0,398.9 L73.0,398.9 M65.0,385.7 L73.0,385.7 M68.0,372.4 L73.0,372.4 M68.0,359.2 L73.0,359.2 M68.0,346.0 L73.0,346.0 M68.0,332.8 L73.0,332.8 M65.0,319.5 L73.0,319.5 M68.0,306.3 L73.0,306.3 M68.0,293.1 L73.0,293.1 M68.0,279.9 L73.0,279.9 M68.0,266.6 L73.0,266.6 M65.0,253.4 L73.0,253.4 M68.0,240.2 L73.0,240.2 M68.0,227.0 L73.0,227.0 M68.0,213.7 L73.0,213.7 M68.0,200.5 L73.0,200.5 M65.0,187.3 L73.0,187.3 M68.0,174.1 L73.0,174.1 M68.0,160.9 L73.0,160.9 M68.0,147.6 L73.0,147.6 M68.0,134.4 L73.0,134.4 M65.0,121.2 L73.0,121.2 M68.0,108.0 L73.0,108.0 M68.0,94.7 L73.0,94.7 M68.0,81.5 L73.0,81.5 M68.0,68.3 L73.0,68.3 M65.0,55.1 L73.0,55.1 M68.0,41.8 L73.0,41.8 M68.0,28.6 L73.0,28.6 M90.8,848.5 L90.8,854.5 M191.7,848.5 L191.7,856.5 M292.6,848.5 L292.6,854.5 M393.6,848.5 L393.6,856.5 M494.5,848.5 L494.5,854.5 M595.5,848.5 L595.5,856.5 M696.4,848.5 L696.4,854.5 M797.3,848.5 L797.3,856.5 M898.3,848.5 L898.3,854.5 M999.2,848.5 L999.2,856.5 M1100.2,848.5 L1100.2,854.5 M1201.1,848.5 L1201.1,856.5 M1302.0,848.5 L1302.0,854.5 M1403.0,848.5 L1403.0,856.5" stroke="#333" stroke-width="2" fill="none"/>
<text transform="translate(61.5,855.4) scale(0.86,1)" text-anchor="end" font-family="Liberation Sans" font-size="19.3" fill="#222" stroke="#222" stroke-width="0.4">40</text>
<rect x="40" y="849.1" width="3.2" height="2.2" fill="#333"/>
<text transform="translate(61.5,789.3) scale(0.86,1)" text-anchor="end" font-family="Liberation Sans" font-size="19.3" fill="#222" stroke="#222" stroke-width="0.4">30</text>
<rect x="40" y="783.0" width="3.2" height="2.2" fill="#333"/>
<text transform="translate(61.5,723.2) scale(0.86,1)" text-anchor="end" font-family="Liberation Sans" font-size="19.3" fill="#222" stroke="#222" stroke-width="0.4">20</text>
<rect x="40" y="716.9" width="3.2" height="2.2" fill="#333"/>
<text transform="translate(61.5,657.0) scale(0.86,1)" text-anchor="end" font-family="Liberation Sans" font-size="19.3" fill="#222" stroke="#222" stroke-width="0.4">10</text>
<rect x="40" y="650.7" width="3.2" height="2.2" fill="#333"/>
<text transform="translate(61.5,590.9) scale(0.86,1)" text-anchor="end" font-family="Liberation Sans" font-size="19.3" fill="#222" stroke="#222" stroke-width="0.4">0</text>
<text transform="translate(61.5,524.8) scale(0.86,1)" text-anchor="end" font-family="Liberation Sans" font-size="19.3" fill="#222" stroke="#222" stroke-width="0.4">10</text>
<text transform="translate(61.5,458.7) scale(0.86,1)" text-anchor="end" font-family="Liberation Sans" font-size="19.3" fill="#222" stroke="#222" stroke-width="0.4">20</text>
<text transform="translate(61.5,392.6) scale(0.86,1)" text-anchor="end" font-family="Liberation Sans" font-size="19.3" fill="#222" stroke="#222" stroke-width="0.4">30</text>
<text transform="translate(61.5,326.4) scale(0.86,1)" text-anchor="end" font-family="Liberation Sans" font-size="19.3" fill="#222" stroke="#222" stroke-width="0.4">40</text>
<text transform="translate(61.5,260.3) scale(0.86,1)" text-anchor="end" font-family="Liberation Sans" font-size="19.3" fill="#222" stroke="#222" stroke-width="0.4">50</text>
<text transform="translate(61.5,194.2) scale(0.86,1)" text-anchor="end" font-family="Liberation Sans" font-size="19.3" fill="#222" stroke="#222" stroke-width="0.4">60</text>
<text transform="translate(61.5,128.1) scale(0.86,1)" text-anchor="end" font-family="Liberation Sans" font-size="19.3" fill="#222" stroke="#222" stroke-width="0.4">70</text>
<text transform="translate(61.5,62.0) scale(0.86,1)" text-anchor="end" font-family="Liberation Sans" font-size="19.3" fill="#222" stroke="#222" stroke-width="0.4">80</text>
<text x="192.6" y="877.7" text-anchor="middle" font-family="Liberation Serif" font-size="17.4" fill="#1a1a1a" stroke="#1a1a1a" stroke-width="0.55" textLength="95.5" lengthAdjust="spacingAndGlyphs">13-May-2018</text>
<text x="392.6" y="875.6" text-anchor="middle" font-family="Liberation Serif" font-size="17.4" fill="#1a1a1a" stroke="#1a1a1a" stroke-width="0.55" textLength="95.5" lengthAdjust="spacingAndGlyphs">15-May-2018</text>
<text x="594.2" y="875.6" text-anchor="middle" font-family="Liberation Serif" font-size="17.4" fill="#1a1a1a" stroke="#1a1a1a" stroke-width="0.55" textLength="95.5" lengthAdjust="spacingAndGlyphs">17-May-2018</text>
<text x="798.0" y="877.7" text-anchor="middle" font-family="Liberation Serif" font-size="17.4" fill="#1a1a1a" stroke="#1a1a1a" stroke-width="0.55" textLength="95.5" lengthAdjust="spacingAndGlyphs">19-May-2018</text>
<text x="998.1" y="875.2" text-anchor="middle" font-family="Liberation Serif" font-size="17.4" fill="#1a1a1a" stroke="#1a1a1a" stroke-width="0.55" textLength="95.5" lengthAdjust="spacingAndGlyphs">21-May-2018</text>
<text x="1198.0" y="876.0" text-anchor="middle" font-family="Liberation Serif" font-size="17.4" fill="#1a1a1a" stroke="#1a1a1a" stroke-width="0.55" textLength="95.5" lengthAdjust="spacingAndGlyphs">23-May-2018</text>
<text x="1403.4" y="874.0" text-anchor="middle" font-family="Liberation Serif" font-size="17.4" fill="#1a1a1a" stroke="#1a1a1a" stroke-width="0.55" textLength="95.5" lengthAdjust="spacingAndGlyphs">25-May-2018</text>
<text x="73.5" y="16" textLength="145" lengthAdjust="spacingAndGlyphs" font-family="Liberation Sans" font-size="17.9" fill="#1a1a1a" stroke="#1a1a1a" stroke-width="0.35">Thermistor Type 1 °C</text>
<text x="1261" y="13.3" textLength="144" lengthAdjust="spacing" font-family="Liberation Sans" font-size="15" fill="#1a1a1a" stroke="#1a1a1a" stroke-width="0.45">logger label is testing</text>
<path d="M1246.8,3 L1251.2,5.3 L1247.3,7.6 Z" fill="#555"/>
<path d="M1259.3,10.6 L1255.8,7 L1253.2,9.8 L1255.6,12.6 L1253.6,14.6 L1249.6,14.6 L1248.2,12.3 L1248.8,10.6" fill="none" stroke="#0a0a0a" stroke-width="2.5" stroke-linejoin="round" stroke-linecap="round"/>
<rect x="5" y="910" width="1489" height="28" fill="#f1f1f1"/>
<rect x="5" y="910" width="1489" height="1.5" fill="#f9f9f9"/>
<rect x="5" y="932" width="1489" height="6" fill="#f5f5f5"/>
<rect x="5" y="908" width="1489" height="2" fill="#c2c2c2"/>
<rect x="5" y="938.5" width="322" height="2" fill="#c2c2c2"/>
<rect x="330" y="938.5" width="240" height="2" fill="#c2c2c2"/>
<rect x="573" y="938.5" width="114" height="2" fill="#c2c2c2"/>
<rect x="690" y="938.5" width="113" height="2" fill="#c2c2c2"/>
<rect x="806" y="938.5" width="86" height="2" fill="#c2c2c2"/>
<rect x="895" y="938.5" width="150" height="2" fill="#c2c2c2"/>
<rect x="1048" y="938.5" width="424" height="2" fill="#c2c2c2"/>
<text x="14.0" y="927.7" textLength="26" lengthAdjust="spacingAndGlyphs" font-family="Liberation Sans" font-size="20.5" fill="#2a2aff" stroke="#2a2aff" stroke-width="0.5">Ch1</text>
<text x="116.0" y="927.7" textLength="28.5" lengthAdjust="spacingAndGlyphs" font-family="Liberation Sans" font-size="20.5" fill="#2a8a2a" stroke="#2a8a2a" stroke-width="0.5">Ch2</text>
<text x="221.0" y="927.7" textLength="28.3" lengthAdjust="spacingAndGlyphs" font-family="Liberation Sans" font-size="20.5" fill="#ff2a2a" stroke="#ff2a2a" stroke-width="0.5">Trial</text>
<text x="321.5" y="927.7" textLength="28.6" lengthAdjust="spacingAndGlyphs" font-family="Liberation Sans" font-size="20.5" fill="#8a2a9a" stroke="#8a2a9a" stroke-width="0.5">Ch4</text></svg>
</body></html>
